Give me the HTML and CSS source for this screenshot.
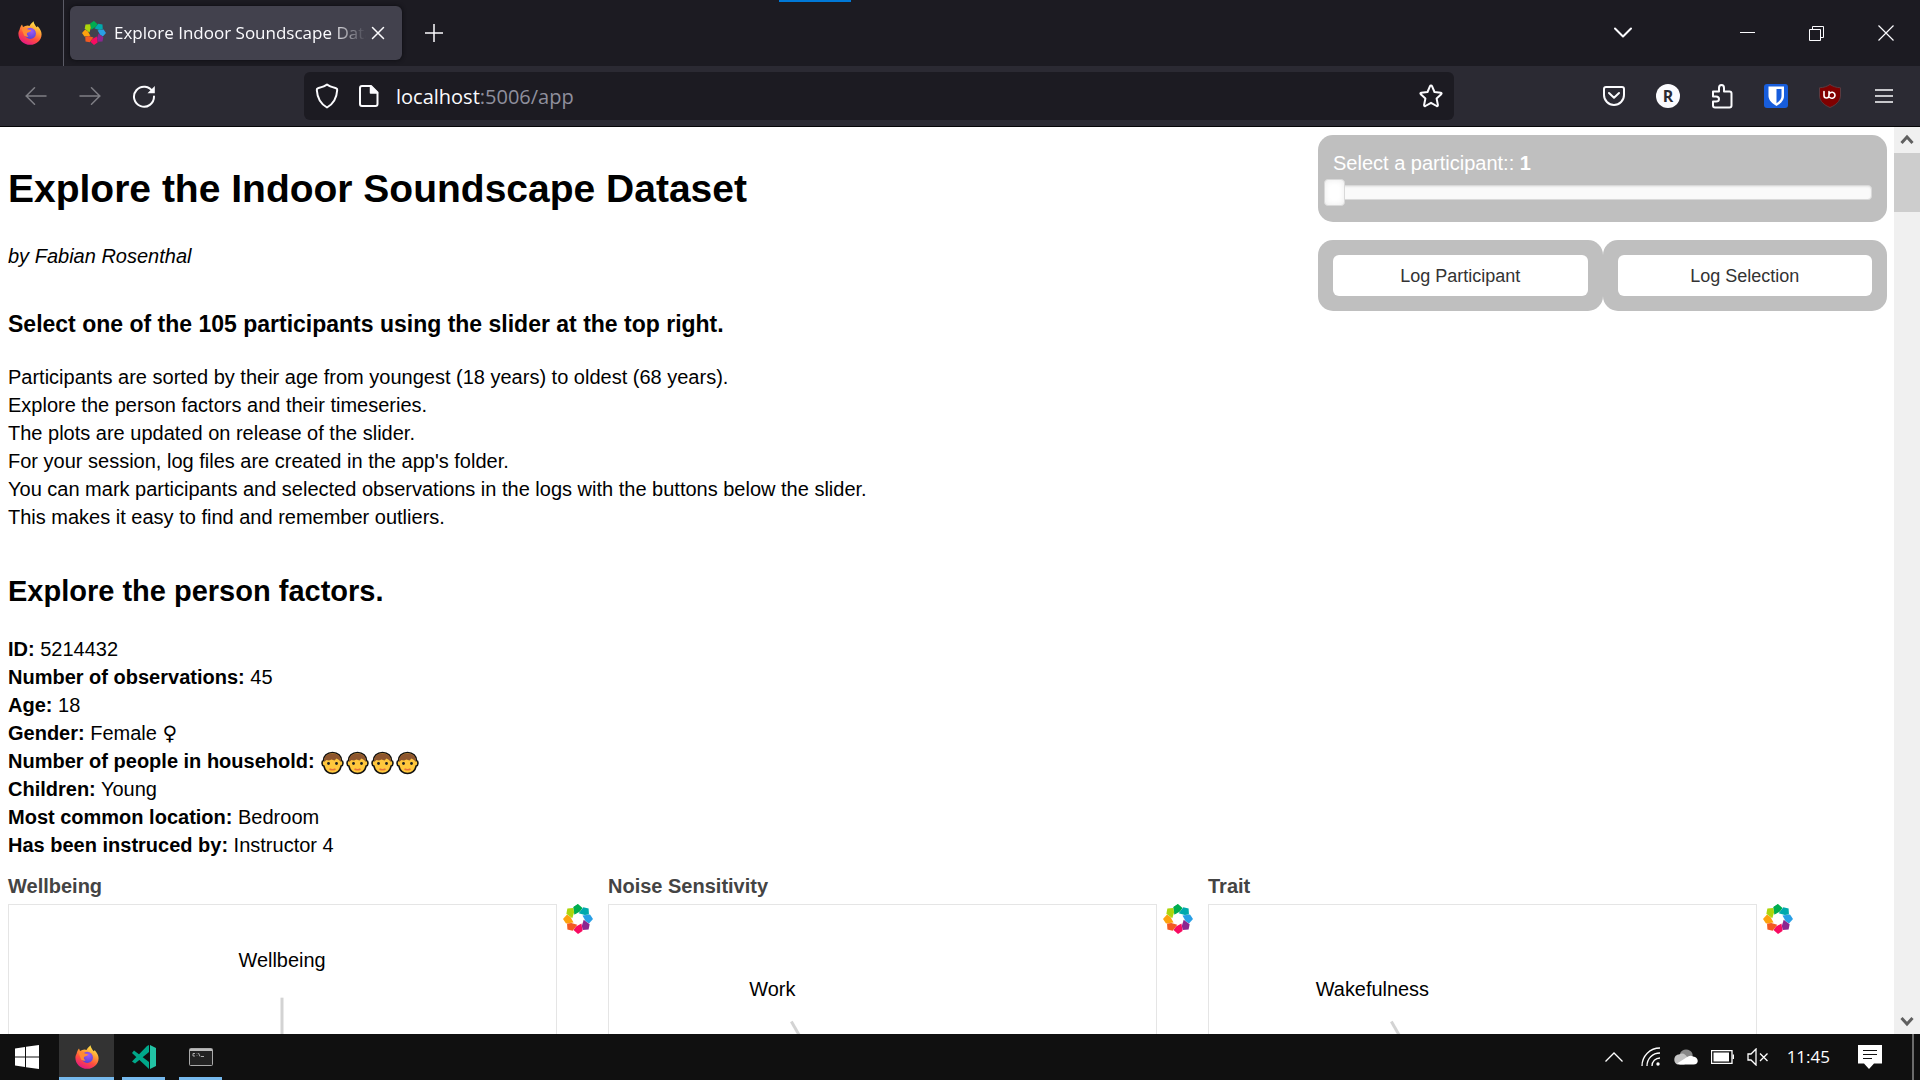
FILE: index.html
```html
<!DOCTYPE html>
<html lang="en">
<head>
<meta charset="utf-8">
<title>Explore Indoor Soundscape Dataset</title>
<link rel="stylesheet" href="styles.css">
</head>
<body>
<svg class="defs" aria-hidden="true">
  <defs>
    <linearGradient id="fox-body" x1="0.8" y1="0" x2="0.3" y2="1">
      <stop offset="0" stop-color="#fff44f"/><stop offset="0.35" stop-color="#ffa436"/><stop offset="0.65" stop-color="#ff4f3d"/><stop offset="1" stop-color="#e31587"/>
    </linearGradient>
    <radialGradient id="fox-globe" cx="0.6" cy="0.3" r="0.8">
      <stop offset="0" stop-color="#a35bf5"/><stop offset="1" stop-color="#4a3fd0"/>
    </radialGradient>
    <symbol id="firefox" viewBox="0 0 24 24">
      <path d="M1.500 9C2 6.500 3 4.500 4 3.500L5 6C6.500 5 8 4.500 9.500 4.500C10.500 4.500 11 4.700 11.500 5C12.500 3 14.500 1.500 15.500 .3C15.800 3 17.500 4.500 18.600 6.200C19 5.600 19.300 5.600 19.700 5.200C21.800 7.500 23.600 10 23.600 13.200C23.600 19.300 18.400 23.800 12.200 23.800C5.800 23.800 .4 19 .4 12.700C.4 11.500 .8 10 1.500 9Z" fill="url(#fox-body)"/>
      <circle cx="12.300" cy="12.400" r="5.600" fill="url(#fox-globe)"/>
      <path d="M3.500 7.500C6 6.300 8.500 7 10 8.500L13.200 9.200C12.800 10.800 11 11 9.800 11.400C8.200 12 8.700 14.500 10.500 15.200C9.500 16 7.500 16 6 14.300Z" fill="#ff8a34"/>
    </symbol>
    <symbol id="bokeh" viewBox="0 0 30 30">
      <path fill="#00ad50" d="M10.500 3L15 0L19.500 4L17 7.500L11.500 10.500Z"/>
      <path fill="#00a9ad" d="M10.500 3L15 0L19.500 4L17 7.500L11.500 10.500Z" transform="rotate(45 15 15)"/>
      <path fill="#299fe5" d="M10.500 3L15 0L19.500 4L17 7.500L11.500 10.500Z" transform="rotate(90 15 15)"/>
      <path fill="#8b2690" d="M10.500 3L15 0L19.500 4L17 7.500L11.500 10.500Z" transform="rotate(135 15 15)"/>
      <path fill="#f80b61" d="M10.500 3L15 0L19.500 4L17 7.500L11.500 10.500Z" transform="rotate(180 15 15)"/>
      <path fill="#f35a22" d="M10.500 3L15 0L19.500 4L17 7.500L11.500 10.500Z" transform="rotate(225 15 15)"/>
      <path fill="#fda20d" d="M10.500 3L15 0L19.500 4L17 7.500L11.500 10.500Z" transform="rotate(270 15 15)"/>
      <path fill="#acd50b" d="M10.500 3L15 0L19.500 4L17 7.500L11.500 10.500Z" transform="rotate(315 15 15)"/>
      <path fill="#00ad50" d="M10.500 3L15 0V8L11.500 10.500Z"/>
    </symbol>
    <symbol id="person" viewBox="0 0 24 24">
      <path d="M12 1.500C6.500 1.500 3 5 3 9.500C1 10 1 14.500 3.300 15C4.500 20 8 22.500 12 22.500S19.500 20 20.700 15C23 14.500 23 10 21 9.500C21 5 17.500 1.500 12 1.500Z" fill="#ffc83d" stroke="#111" stroke-width="1.600"/>
      <path d="M3.500 11C3 5 7 2.500 12 2.500S21 5 20.500 11L18.500 9L16 7.500L14 9.500L11 8.500L8.500 9.500L6 9Z" fill="#8e562e"/>
      <circle cx="8" cy="12.500" r="1.400" fill="#222"/><circle cx="16" cy="12.500" r="1.400" fill="#222"/>
      <path d="M9 18Q12 19.500 15 18" fill="none" stroke="#e8743b" stroke-width="1.600"/>
    </symbol>
  </defs>
</svg>

<header class="browser">
  <div class="tabbar">
    <span class="progress"></span>
    <button class="pinned" aria-label="Firefox View"><svg width="24" height="24"><use href="#firefox"/></svg></button>
    <div class="tab">
      <svg width="24" height="24"><use href="#bokeh"/></svg>
      <span class="tab-title">Explore Indoor Soundscape Dataset</span>
      <button class="tab-close" aria-label="Close tab"><svg width="14" height="14" viewBox="0 0 14 14"><path d="M1.500 1.500L12.500 12.500M12.500 1.500L1.500 12.500"/></svg></button>
    </div>
    <button class="tool" aria-label="New tab"><svg width="18" height="18" viewBox="0 0 18 18"><path d="M9 0V18M0 9H18"/></svg></button>
    <span class="spacer"></span>
    <button class="tool list-tabs" aria-label="List all tabs"><svg width="18" height="12" viewBox="0 0 18 12"><path d="M1 1.500L9 9.500L17 1.500" stroke-width="2"/></svg></button>
    <button class="window-button" aria-label="Minimize"><svg width="15" height="15" viewBox="0 0 15 15"><path d="M0 6.500H15" stroke-width="1"/></svg></button>
    <button class="window-button" aria-label="Restore"><svg width="15" height="15" viewBox="0 0 15 15"><path d="M.5 3.500H11.500V14.500H.5ZM3.500 3.500V.5H14.500V11.500H11.500" stroke-width="1"/></svg></button>
    <button class="window-button" aria-label="Close"><svg width="16" height="16" viewBox="0 0 16 16"><path d="M.5 .5L15.500 15.500M15.500 .5L.5 15.500" stroke-width="1.200"/></svg></button>
  </div>
  <nav class="navbar">
    <button class="tool dim" aria-label="Back"><svg width="22" height="18" viewBox="0 0 22 18"><path d="M21 9H1M9.500 .8L1.200 9L9.500 17.200"/></svg></button>
    <button class="tool dim" aria-label="Forward"><svg width="22" height="18" viewBox="0 0 22 18"><path d="M1 9H21M12.500 .8L20.800 9L12.500 17.200"/></svg></button>
    <button class="tool" aria-label="Reload"><svg width="24" height="24" viewBox="0 0 24 24"><path d="M20.800 8A10 10 0 1 0 22 12.500" stroke-width="2"/><path d="M22.800 2V9.300H15.500Z" fill="#fbfbfe" stroke="none"/></svg></button>
    <div class="urlbar">
      <button aria-label="Tracking protection"><svg width="24" height="26" viewBox="0 0 24 26"><path d="M12 1.500C14.500 3.500 18.500 4.500 21 5.200C22 5.500 22.300 6 22.200 7C21.800 14 19 20.500 12 24.500C5 20.500 2.200 14 1.800 7C1.700 6 2 5.500 3 5.200C5.500 4.500 9.500 3.500 12 1.500Z" stroke-width="2"/></svg></button>
      <button aria-label="Site information"><svg width="20" height="22" viewBox="0 0 20 22"><path d="M3 1H12L18.500 7.500V19Q18.500 21 16.500 21H3Q1 21 1 19V3Q1 1 3 1Z" stroke-width="2"/><path d="M11.500 1L18.500 8H11.500Z" fill="#fbfbfe"/></svg></button>
      <a class="address" href="#top">localhost<span>:5006/app</span></a>
      <button class="star" aria-label="Bookmark this page"><svg width="24" height="24" viewBox="0 0 24 24"><path d="M12 1.500Q12.700 1.500 13 2.200L15.500 8L21.800 8.700Q23.200 9 22.200 10.200L17.600 14.500L18.900 21Q19 22.500 17.600 22L12 18.800L6.400 22Q5 22.500 5.100 21L6.400 14.500L1.800 10.200Q.8 9 2.200 8.700L8.500 8L11 2.200Q11.300 1.500 12 1.500Z" stroke-width="2"/></svg></button>
    </div>
    <button class="tool" aria-label="Save to Pocket"><svg width="22" height="20" viewBox="0 0 22 20"><path d="M3 1H19Q21 1 21 3V9A10 10 0 0 1 1 9V3Q1 1 3 1ZM6 7L11 11.800L16 7" stroke-width="2"/></svg></button>
    <button class="tool" aria-label="Account R"><span class="avatar">R</span></button>
    <button class="tool" aria-label="Extensions"><svg width="22" height="26" viewBox="0 0 22 26"><path d="M2 8.500H8V5Q8 2 10.500 2T13 5V8.500H18.500Q20.500 8.500 20.500 10.500V22.500Q20.500 24.500 18.500 24.500H4Q2 24.500 2 22.500V18.500H5Q8 18.500 8 16T5 13.500H2Z" stroke-width="2"/></svg></button>
    <button class="tool" aria-label="Bitwarden"><svg width="24" height="24" viewBox="0 0 24 24"><rect width="24" height="24" rx="3" fill="#175ddc" stroke="none"/><path d="M5 2.500H20V12C20 16.500 16.500 19.500 12.500 22C8.500 19.500 4.500 16.500 4.500 12V2.500Z" fill="#fff" stroke="none"/><path d="M12.500 5H17.500V12C17.500 15 15.500 17.200 12.500 19.200Z" fill="#175ddc" stroke="none"/></svg></button>
    <button class="tool" aria-label="uBlock Origin"><svg width="24" height="24" viewBox="0 0 24 24"><path d="M12 .5C15 2.500 18 3.500 22.500 3.800V12C22 17.500 18 21 12 23.500C6 21 2 17.500 1.500 12V3.800C6 3.500 9 2.500 12 .5Z" fill="#800000" stroke="#5a3a40" stroke-width="1"/><path d="M6 7.500V11.500A2.500 2.500 0 0 0 11 11.500V7.500M11 11.500A3 3 0 1 1 12 13.500" stroke-width="1.600" stroke="#fff"/></svg></button>
    <button class="tool" aria-label="Menu"><svg width="18" height="16" viewBox="0 0 18 16"><path d="M0 2H18M0 8H18M0 14H18"/></svg></button>
  </nav>
</header>

<div class="viewport" id="top">
  <main class="page">
    <div class="top">
      <article class="intro">
        <h1>Explore the Indoor Soundscape Dataset</h1>
        <p class="byline">by Fabian Rosenthal</p>
        <h3>Select one of the 105 participants using the slider at the top right.</h3>
        <p>Participants are sorted by their age from youngest (18 years) to oldest (68 years).<br>
        Explore the person factors and their timeseries.<br>
        The plots are updated on release of the slider.<br>
        For your session, log files are created in the app's folder.<br>
        You can mark participants and selected observations in the logs with the buttons below the slider.<br>
        This makes it easy to find and remember outliers.</p>
        <h2>Explore the person factors.</h2>
        <p><b>ID:</b> 5214432<br>
        <b>Number of observations:</b> 45<br>
        <b>Age:</b> 18<br>
        <b>Gender:</b> Female <span class="symbol">♀</span><br>
        <b>Number of people in household:</b> <span class="people" role="img" aria-label="4 people"><svg width="25" height="24"><use href="#person"/></svg><svg width="25" height="24"><use href="#person"/></svg><svg width="25" height="24"><use href="#person"/></svg><svg width="25" height="24"><use href="#person"/></svg></span><br>
        <b>Children:</b> Young<br>
        <b>Most common location:</b> Bedroom<br>
        <b>Has been instruced by:</b> Instructor 4</p>
      </article>
      <aside class="controls">
        <div class="panel slider-panel">
          <label for="participant">Select a participant:: <b>1</b></label>
          <div class="track"><input id="participant" type="range" min="1" max="105" value="1"></div>
        </div>
        <div class="button-row">
          <div class="panel"><button>Log Participant</button></div>
          <div class="panel"><button>Log Selection</button></div>
        </div>
      </aside>
    </div>
    <div class="plots">
      <section class="plot">
        <h4>Wellbeing</h4>
        <div class="figure">
          <svg class="chart" width="549" height="549" viewBox="0 0 549 549"><path d="M274 93V274"/><text x="274" y="62">Wellbeing</text></svg>
          <a href="#top" aria-label="Bokeh"><svg width="30" height="30"><use href="#bokeh"/></svg></a>
        </div>
      </section>
      <section class="plot">
        <h4>Noise Sensitivity</h4>
        <div class="figure">
          <svg class="chart" width="549" height="549" viewBox="0 0 549 549"><path d="M183 117L274 274"/><text x="164" y="91">Work</text></svg>
          <a href="#top" aria-label="Bokeh"><svg width="30" height="30"><use href="#bokeh"/></svg></a>
        </div>
      </section>
      <section class="plot">
        <h4>Trait</h4>
        <div class="figure">
          <svg class="chart" width="549" height="549" viewBox="0 0 549 549"><path d="M183 117L274 274"/><text x="164" y="91">Wakefulness</text></svg>
          <a href="#top" aria-label="Bokeh"><svg width="30" height="30"><use href="#bokeh"/></svg></a>
        </div>
      </section>
    </div>
  </main>
  <div class="scrollbar" aria-hidden="true">
    <svg width="26" height="26" viewBox="0 0 26 26"><path d="M7.500 16L13 10L18.500 16"/></svg>
    <div class="thumb"></div>
    <svg width="26" height="26" viewBox="0 0 26 26"><path d="M7.500 10L13 16L18.500 10"/></svg>
  </div>
</div>

<footer class="taskbar">
  <button class="start" aria-label="Start"><svg width="24" height="24" viewBox="0 0 24 24"><path fill="#fff" d="M0 3.400L10 2V11.500H0ZM11 1.800L24 0V11.500H11ZM0 12.500H10V22L0 20.600ZM11 12.500H24V24L11 22.200Z"/></svg></button>
  <button class="app active" aria-label="Firefox"><svg width="24" height="24"><use href="#firefox"/></svg></button>
  <button class="app" aria-label="Visual Studio Code"><svg width="24" height="24" viewBox="0 0 24 24"><path fill="#00a88a" d="M17 0V7L3 18.500L0 16.500L15 1ZM2 5.500L17 17V24L0 8Z"/><path fill="#22c3a5" d="M18 0L24 3V21L18 24Z"/></svg></button>
  <button class="app" aria-label="Command Prompt"><svg width="24" height="18" viewBox="0 0 24 18"><rect x=".5" y=".5" width="23" height="17" rx="1" fill="#222" stroke="#aaa"/><path d="M1 1H23V3H1Z" fill="#bbb"/><path d="M6 5.500H4V8H6M8 5.500V6M8 7.500V8M9.500 5L11 8.500M12 8.500H15" fill="none" stroke="#ccc" stroke-width=".8"/></svg></button>
  <span class="spacer"></span>
  <div class="tray">
    <svg class="expand" width="18" height="10" viewBox="0 0 18 10"><path d="M.5 9.500L9 1L17.500 9.500"/></svg>
    <svg width="20" height="20" viewBox="0 0 20 20"><path d="M1 19C1 9 9 1 19 1M6 19C6 11.500 11.500 6 19 6M11 19C11 14.500 14.500 11 19 11"/><circle cx="17" cy="17" r="1.700" fill="#fff" stroke="none"/></svg>
    <svg width="24" height="16" viewBox="0 0 24 16"><path d="M6 5C7 -1 17 -1 18.500 5L19 12H5Z" fill="#888" stroke="none"/><path d="M5 15.500C-1.500 15.500-1 5.500 5 5.500C9 3 12 6 13 8L18 12L10 15.500Z" fill="#c4c4c4" stroke="none"/><path d="M3 14.500L14 7.500C16 6.500 17.500 6.500 19 7.500C25 8 25.500 15.500 19.500 15.500H6Z" fill="#fff" stroke="none"/></svg>
    <svg width="23" height="14" viewBox="0 0 23 14"><path d="M.5 .5H21V13.500H.5ZM22.500 4.500V9"/><path d="M2.500 2.500H18V11.500H2.500Z" fill="#fff" stroke="none"/></svg>
    <svg width="22" height="18" viewBox="0 0 22 18"><path d="M1 6H4L9 1V17L4 12H1ZM13 5.500L20.500 13M20.500 5.500L13 13"/></svg>
  </div>
  <time>11:45</time>
  <button class="notify" aria-label="Notifications"><svg width="24" height="24" viewBox="0 0 24 24"><path d="M0 0H24V18.500H16L11 24L6 18.500H0Z" fill="#fff"/><path d="M5 5.500H19M5 9.500H19M5 13.500H14" stroke="#101010"/></svg></button>
  <span class="show-desktop"></span>
</footer>
</body>
</html>
```
FILE: styles.css
```css
* { box-sizing: border-box; }

html, body { height: 100%; }

body {
  margin: 0;
  display: flex;
  flex-direction: column;
  overflow: hidden;
  background: #fff;
  color: #000;
  font: 20px/28px "Liberation Sans", Arial, sans-serif;
}

button {
  margin: 0;
  padding: 0;
  border: 0;
  background: none;
  color: inherit;
  font: inherit;
}

svg { display: block; flex: none; }
.defs { position: absolute; width: 0; height: 0; }
.spacer { flex: 1; }

/* Browser chrome */
.browser {
  flex: none;
  border-bottom: 1px solid #060608;
  background: #2b2a33;
  color: #fbfbfe;
  font-family: "Open Sans", "Noto Sans", sans-serif;
}

.browser button, .taskbar button {
  display: flex;
  align-items: center;
  justify-content: center;
}

.browser button svg { fill: none; stroke: #fbfbfe; stroke-width: 1.5; stroke-linecap: round; stroke-linejoin: round; }

.tabbar {
  position: relative;
  display: flex;
  align-items: center;
  height: 66px;
  background: #1c1b22;
}

.progress {
  position: absolute;
  top: 0;
  left: 779px;
  width: 72px;
  height: 2px;
  background: #0078d7;
}

.tabbar .pinned {
  width: 64px;
  height: 66px;
  padding-right: 4px;
  border-right: 1px solid #5b5b66;
}

.browser .pinned svg { stroke: none; }

.tab {
  display: flex;
  align-items: center;
  gap: 8px;
  width: 332px;
  height: 54px;
  margin: 0 5px 0 6px;
  padding: 0 12px;
  border-radius: 6px;
  background: #42414d;
  box-shadow: 0 0 4px #0c0c10;
}

.tab-title {
  flex: 1;
  overflow: hidden;
  white-space: nowrap;
  font-size: 17px;
  -webkit-mask-image: linear-gradient(to left, transparent, #000 36px);
  mask-image: linear-gradient(to left, transparent, #000 36px);
}

.tab-close { width: 24px; height: 24px; margin-left: -8px; }
.tool { width: 54px; height: 54px; }
.list-tabs { margin-right: 63px; }
.window-button { width: 69px; height: 66px; }
.browser .window-button svg { stroke-linecap: butt; stroke-linejoin: miter; }

.navbar {
  display: flex;
  align-items: center;
  height: 60px;
  padding: 0 9px;
}

.dim { opacity: 0.4; }

.urlbar {
  display: flex;
  align-items: center;
  flex: 1;
  height: 48px;
  margin: 0 133px;
  padding: 0 2px;
  border-radius: 6px;
  background: #1c1b22;
}

.urlbar button { width: 42px; height: 48px; }

.address {
  flex: 1;
  margin-left: 6px;
  padding-top: 2px;
  color: #fbfbfe;
  font-size: 20px;
  text-decoration: none;
}

.address span { color: #8f8f9d; }

.avatar {
  width: 24px;
  height: 24px;
  border-radius: 50%;
  background: #fbfbfe;
  color: #2b2a33;
  font: bold 16px/24px "Open Sans", sans-serif;
}

/* Page viewport */
.viewport { display: flex; flex: 1; min-height: 0; }
.page { flex: 1; min-width: 0; overflow: hidden; padding: 8px 7px; }
.top { display: flex; align-items: flex-start; justify-content: space-between; }
.intro { padding: 26px 0 0 1px; }
h1, h2, h3, h4, p { margin: 0; }
h1 { font-size: 39px; line-height: 56px; }
.byline { margin-top: 25px; font-style: italic; }
h3 { margin-top: 38px; font-size: 23px; line-height: 32px; }
h3 + p { margin-top: 23px; }
h2 { margin-top: 40px; font-size: 29px; line-height: 40px; }
h2 + p { margin-top: 24px; }
.symbol { font-family: "DejaVu Sans", sans-serif; line-height: 20px; }

.people {
  display: inline-flex;
  height: 24px;
  vertical-align: middle;
}

.controls { flex: none; width: calc(30% + 5px); }

.panel {
  flex: 1;
  padding: 15px;
  border-radius: 15px;
  background: #bfbfbf;
}

.slider-panel { height: 87px; padding-top: 14px; color: #fff; }
.slider-panel label { display: block; }

.track {
  display: flex;
  height: 15px;
  margin-top: 8px;
  border: 1px solid #d9d9d9;
  border-radius: 4px;
  background: #fafafa;
  box-shadow: inset 0 1px 2px #e6e6e6;
}

.track input {
  flex: 1;
  height: 27px;
  margin: -7px -10px;
  background: none;
  appearance: none;
}

.track input::-webkit-slider-thumb {
  width: 21px;
  height: 27px;
  border: 1px solid #d9d9d9;
  border-radius: 4px;
  background: #fff;
  box-shadow: inset 0 0 6px #ebebeb;
  appearance: none;
}

.button-row { display: flex; margin-top: 18px; }

.panel button {
  width: 100%;
  height: 41px;
  border-radius: 6px;
  background: #fff;
  color: #333;
  font-size: 18px;
}

.plots { display: flex; margin-top: 13px; padding-left: 1px; }
.plot { width: 600px; flex: none; }
.plot h4 { color: #444; font-size: 20px; line-height: 28px; }
.figure { display: flex; align-items: flex-start; gap: 6px; margin-top: 4px; }
.chart { border: 1px solid #e5e5e5; }
.chart path { stroke: #d3d3d3; stroke-width: 3; }
.chart text { font-size: 20px; text-anchor: middle; }

.scrollbar { display: flex; flex-direction: column; width: 26px; background: #f0f0f0; }
.scrollbar path { fill: none; stroke: #606060; stroke-width: 3; }
.thumb { height: 59px; margin-bottom: auto; background: #cdcdcd; }

/* Taskbar */
.taskbar {
  display: flex;
  flex: none;
  height: 46px;
  background: #101010;
  color: #fff;
  font-family: "Open Sans", "Noto Sans", sans-serif;
}

.start { width: 54px; margin-right: 5px; }
.app { width: 43px; margin-right: 14px; padding-top: 3px; }
.taskbar .app { border-bottom: 3px solid #76b9ed; }
.taskbar .active { width: 55px; margin-right: 8px; background: #333; }
.tray { display: flex; align-items: center; gap: 13px; }
.tray svg { fill: none; stroke: #fff; stroke-width: 1.3; }
.tray .expand { margin-right: 5px; }
time { margin: 0 28px 0 18px; font-size: 17px; line-height: 46px; }
.notify { margin-right: 30px; }
.show-desktop { width: 8px; border-left: 2px solid #6b6b6b; }
```
